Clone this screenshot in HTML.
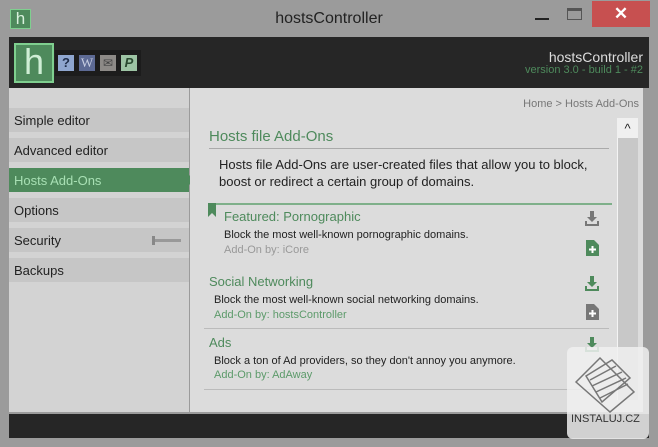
<!DOCTYPE html><html><head><style>
*{margin:0;padding:0;box-sizing:border-box}
body{width:658px;height:447px;background:#9b9b9b;font-family:"Liberation Sans",sans-serif;position:relative;overflow:hidden}
.a{position:absolute}
.mi{position:absolute;left:9px;width:180px;height:24px;background:#c6c6c6;font-size:13px;color:#222;padding:5px 0 0 5px}
.t{font-size:13px;color:#4e8a5c}
.d{font-size:11px;color:#222}
.b{font-size:11px;color:#5c9a6a}
</style></head><body>
<div class="a" style="left:10px;top:9px;width:21px;height:20px;background:#4e8a5c;border:1px solid #7fcf8f;color:#d8f0dc;font-size:17px;text-align:center;line-height:18px">h</div>
<div class="a" style="left:0;width:658px;top:10px;text-align:center;font-size:16px;color:#222">hostsController</div>
<div class="a" style="left:535px;top:18px;width:14px;height:2px;background:#222"></div>
<div class="a" style="left:567px;top:8px;width:15px;height:12px;border:1px solid #555;border-top-width:3px"></div>
<div class="a" style="left:592px;top:1px;width:58px;height:26px;background:#c75050;color:#fff;font-size:17px;text-align:center;line-height:25px;font-weight:bold">✕</div>
<div class="a" style="left:9px;top:37px;width:640px;height:51px;background:#262626"></div>
<div class="a" style="left:14px;top:43px;width:40px;height:40px;background:#4e8a5c;border:2px solid #7fcf8f;color:#cfeed5;font-size:36px;text-align:center;line-height:34px">h</div>
<div class="a" style="left:55px;top:50px;width:86px;height:26px;background:#1c1c1c"></div>
<div class="a" style="left:58px;top:55px;width:16px;height:16px;background:#8fa6cf;color:#1f2d4a;font-weight:bold;font-size:13px;text-align:center;line-height:16px">?</div>
<div class="a" style="left:79px;top:55px;width:16px;height:16px;background:#5d6a94;color:#c9cfe3;font-family:'Liberation Serif';font-size:13px;text-align:center;line-height:16px">W</div>
<div class="a" style="left:100px;top:55px;width:16px;height:16px;background:#8d8a87;color:#444;font-size:12px;text-align:center;line-height:16px">✉</div>
<div class="a" style="left:121px;top:55px;width:16px;height:16px;background:#9dc4a4;color:#2a4a30;font-weight:bold;font-style:italic;font-size:13px;text-align:center;line-height:16px">P</div>
<div class="a" style="right:15px;top:49px;font-size:14px;color:#ddd">hostsController</div>
<div class="a" style="right:15px;top:64px;font-size:11px;color:#4e8a5c">version 3.0 - build 1 - #2</div>
<div class="a" style="left:9px;top:88px;width:180px;height:324px;background:#d3d3d3"></div>
<div class="mi" style="top:108px">Simple editor</div>
<div class="mi" style="top:138px">Advanced editor</div>
<div class="mi" style="top:168px;background:#4e8a5c;color:#a8e0b4">Hosts Add-Ons</div>
<div class="a" style="left:189px;top:175px;width:0;height:0;border-left:5px solid #4e8a5c;border-top:5px solid transparent;border-bottom:5px solid transparent"></div>
<div class="mi" style="top:198px">Options</div>
<div class="mi" style="top:228px">Security</div>
<div class="a" style="left:152px;top:236px;width:3px;height:9px;background:#888"></div>
<div class="a" style="left:155px;top:239px;width:26px;height:3px;background:#999"></div>
<div class="mi" style="top:258px">Backups</div>
<div class="a" style="left:190px;top:88px;width:453px;height:324px;background:#dcdcdc"></div>
<div class="a" style="right:19px;top:98px;font-size:11px;color:#777">Home &gt; Hosts Add-Ons</div>
<div class="a" style="left:617px;top:118px;width:21px;height:282px;background:#c8c8c8;border-left:1px solid #f4f4f4"></div>
<div class="a" style="left:617px;top:118px;width:21px;height:20px;background:#f0f0f0;text-align:center;font-size:13px;color:#222;line-height:22px">^</div>
<div class="a" style="left:209px;top:128px;font-size:15px;color:#4e8a5c">Hosts file Add-Ons</div>
<div class="a" style="left:209px;top:148px;width:400px;height:1px;background:#aaa"></div>
<div class="a" style="left:219px;top:156px;font-size:13px;color:#222;line-height:17px">Hosts file Add-Ons are user-created files that allow you to block,<br>boost or redirect a certain group of domains.</div>
<div class="a" style="left:208px;top:203px;width:404px;height:2px;background:#7fb08a"></div>
<svg class="a" style="left:208px;top:203px" width="8" height="14"><path d="M0 0H8V14L4 10L0 14Z" fill="#4e8a5c"/></svg>
<div class="a t" style="left:224px;top:209px">Featured: Pornographic</div>
<div class="a d" style="left:224px;top:229px">Block the most well-known pornographic domains.</div>
<div class="a b" style="left:224px;top:244px;color:#999">Add-On by: iCore</div>
<div class="a t" style="left:209px;top:274px">Social Networking</div>
<div class="a d" style="left:214px;top:294px">Block the most well-known social networking domains.</div>
<div class="a b" style="left:214px;top:309px">Add-On by: hostsController</div>
<div class="a" style="left:204px;top:328px;width:405px;height:1px;background:#bbb"></div>
<div class="a t" style="left:209px;top:335px">Ads</div>
<div class="a d" style="left:214px;top:355px">Block a ton of Ad providers, so they don't annoy you anymore.</div>
<div class="a b" style="left:214px;top:369px">Add-On by: AdAway</div>
<div class="a" style="left:204px;top:389px;width:405px;height:1px;background:#bbb"></div>
<svg class="a" style="left:584px;top:211px" width="16" height="16"><path d="M6 0H10V6H13L8 11L3 6H6Z M1 10V15H15V10H13V13H3V10Z" fill="#777"/></svg>
<svg class="a" style="left:586px;top:240px" width="13" height="16"><path d="M0 0H8L13 5V16H0Z" fill="#4e8a5c"/><path d="M5.5 6H7.5V8.5H10V10.5H7.5V13H5.5V10.5H3V8.5H5.5Z" fill="#fff"/></svg>
<svg class="a" style="left:584px;top:276px" width="16" height="16"><path d="M6 0H10V6H13L8 11L3 6H6Z M1 10V15H15V10H13V13H3V10Z" fill="#4e8a5c"/></svg>
<svg class="a" style="left:586px;top:304px" width="13" height="16"><path d="M0 0H8L13 5V16H0Z" fill="#777"/><path d="M5.5 6H7.5V8.5H10V10.5H7.5V13H5.5V10.5H3V8.5H5.5Z" fill="#fff"/></svg>
<svg class="a" style="left:584px;top:337px" width="16" height="16"><path d="M6 0H10V6H13L8 11L3 6H6Z M1 10V15H15V10H13V13H3V10Z" fill="#4e8a5c"/></svg>
<div class="a" style="left:9px;top:414px;width:640px;height:24px;background:#262626"></div>
<div class="a" style="left:567px;top:347px;width:82px;height:92px;background:rgba(240,240,240,.85);border-radius:6px"></div>
<svg class="a" style="left:572px;top:352px" width="72" height="62"><g fill="none" stroke="#777" stroke-width="1.5"><path d="M4 30L28 6L62 40L38 60Z"/><path d="M14 24L40 8L58 26L30 50Z"/><path d="M18 28L44 14M20 34L50 20M24 40L54 26M28 46L56 32"/></g></svg>
<div class="a" style="left:571px;top:413px;font-size:11px;color:#333">INSTALUJ.CZ</div>
</body></html>
